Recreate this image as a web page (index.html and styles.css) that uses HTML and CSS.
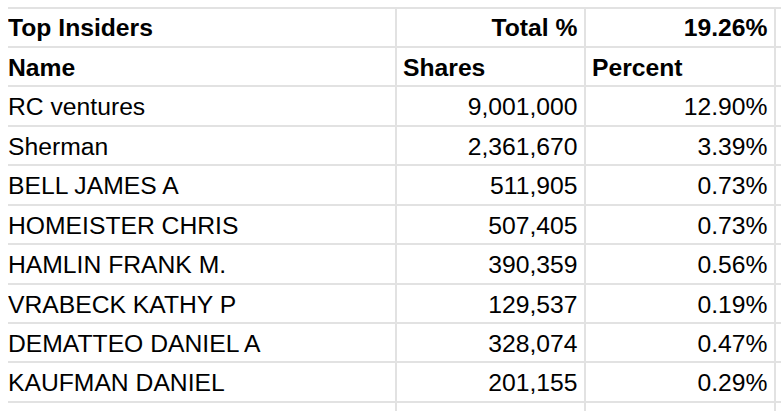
FILE: index.html
```html
<!DOCTYPE html>
<html lang="en">
<head>
<meta charset="utf-8">
<title>Top Insiders</title>
<link rel="stylesheet" href="styles.css">
</head>
<body>
<div class="sheet">
  <div class="cell bold first">Top Insiders</div>
  <div class="cell bold num">Total %</div>
  <div class="cell bold num">19.26%</div>
  <div class="cell edge"></div>

  <div class="cell bold first">Name</div>
  <div class="cell bold">Shares</div>
  <div class="cell bold">Percent</div>
  <div class="cell edge"></div>

  <div class="cell first">RC ventures</div>
  <div class="cell num">9,001,000</div>
  <div class="cell num">12.90%</div>
  <div class="cell edge"></div>

  <div class="cell first">Sherman</div>
  <div class="cell num">2,361,670</div>
  <div class="cell num">3.39%</div>
  <div class="cell edge"></div>

  <div class="cell first">BELL JAMES A</div>
  <div class="cell num">511,905</div>
  <div class="cell num">0.73%</div>
  <div class="cell edge"></div>

  <div class="cell first">HOMEISTER CHRIS</div>
  <div class="cell num">507,405</div>
  <div class="cell num">0.73%</div>
  <div class="cell edge"></div>

  <div class="cell first">HAMLIN FRANK M.</div>
  <div class="cell num">390,359</div>
  <div class="cell num">0.56%</div>
  <div class="cell edge"></div>

  <div class="cell first">VRABECK KATHY P</div>
  <div class="cell num">129,537</div>
  <div class="cell num">0.19%</div>
  <div class="cell edge"></div>

  <div class="cell first">DEMATTEO DANIEL A</div>
  <div class="cell num">328,074</div>
  <div class="cell num">0.47%</div>
  <div class="cell edge"></div>

  <div class="cell first">KAUFMAN DANIEL</div>
  <div class="cell num">201,155</div>
  <div class="cell num">0.29%</div>
  <div class="cell edge"></div>

  <div class="cell first"></div>
  <div class="cell"></div>
  <div class="cell"></div>
  <div class="cell edge"></div>
</div>
</body>
</html>
```

FILE: styles.css
```css
html, body {
  margin: 0;
  padding: 0;
  background: #ffffff;
  overflow: hidden;
  height: 412px;
}

.sheet {
  margin: 6.5px 0 0 7.5px;
  display: grid;
  grid-template-columns: 389.5px 189px 190px 5px;
  grid-template-rows: repeat(10, 39.44px) 10px;
  font-family: "Liberation Sans", Arial, sans-serif;
  font-size: 24.7px;
  line-height: 28px;
  color: #000000;
}

.cell {
  box-sizing: border-box;
  border-top: 2px solid #e2e2e2;
  border-right: 2px solid #e2e2e2;
  display: flex;
  align-items: flex-end;
  justify-content: flex-start;
  padding: 0 6px 3.5px 6px;
  white-space: nowrap;
  overflow: hidden;
}

.cell.first {
  padding-left: 0.5px;
}

.cell.edge {
  border-right: none;
}

.cell.num {
  justify-content: flex-end;
  padding-right: 6.5px;
}

.cell.bold {
  font-weight: bold;
}
```
